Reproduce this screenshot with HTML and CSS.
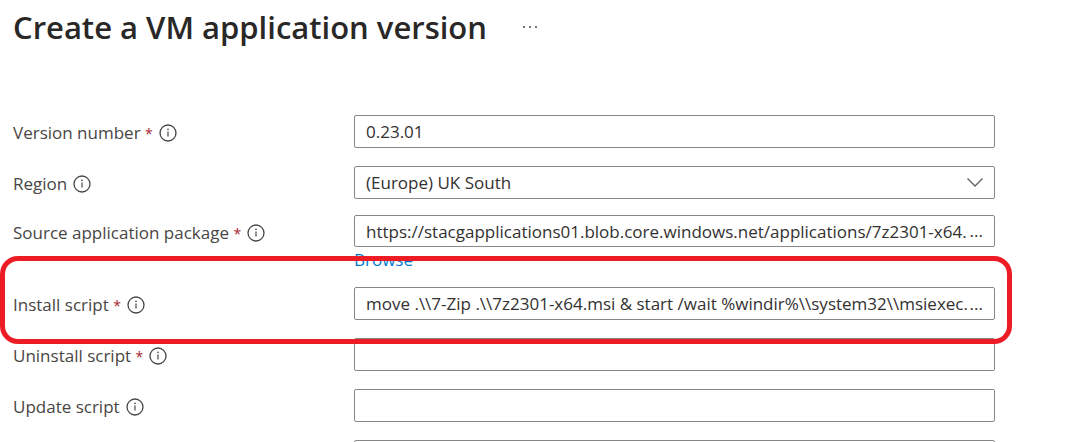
FILE: index.html
```html
<!DOCTYPE html>
<html lang="en">
<head>
<meta charset="utf-8">
<title>Create a VM application version</title>
<link rel="stylesheet" href="styles.css">
</head>
<body>
<svg class="defs" aria-hidden="true">
  <symbol id="info" viewBox="0 0 18 18">
    <circle cx="9" cy="9" r="8" fill="none" stroke="currentColor" stroke-width="1.3"/>
    <path d="M9 7.6V12.6" stroke="currentColor" stroke-width="1.2"/>
    <circle cx="9" cy="5.4" r="0.8" fill="currentColor"/>
  </symbol>
</svg>
<main class="page">
  <header class="header">
    <h1 class="title">Create a VM application version</h1>
    <button class="more" type="button" aria-label="More actions">
      <svg class="more-icon" viewBox="0 0 16 4" aria-hidden="true"><circle cx="2" cy="2" r="1"/><circle cx="8" cy="2" r="1"/><circle cx="14" cy="2" r="1"/></svg>
    </button>
  </header>
  <form class="form">
    <div class="row">
      <div class="caption"><label for="version">Version number <span class="required">*</span></label><button class="info" type="button" aria-label="About version number"><svg class="info-icon"><use href="#info"/></svg></button></div>
      <div class="field"><input class="input" id="version" type="text" value="0.23.01"></div>
    </div>
    <div class="row row-tight">
      <div class="caption"><label for="region">Region</label><button class="info" type="button" aria-label="About region"><svg class="info-icon"><use href="#info"/></svg></button></div>
      <div class="field">
        <select class="input" id="region"><option>(Europe) UK South</option></select>
        <svg class="chevron" viewBox="0 0 16 9" aria-hidden="true"><path d="M0.5 0.5L8 8L15.5 0.5"/></svg>
      </div>
    </div>
    <div class="row">
      <div class="caption"><label for="package">Source application package <span class="required">*</span></label><button class="info" type="button" aria-label="About source application package"><svg class="info-icon"><use href="#info"/></svg></button></div>
      <div class="stack">
        <div class="field field-short"><input class="input" id="package" type="text" value="https://stacgapplications01.blob.core.windows.net/applications/7z2301-x64."><span class="ellipsis">...</span></div>
        <a class="browse" href="#package">Browse</a>
      </div>
    </div>
    <div class="row row-marked">
      <div class="caption"><label for="install">Install script <span class="required">*</span></label><button class="info" type="button" aria-label="About install script"><svg class="info-icon"><use href="#info"/></svg></button></div>
      <div class="field"><input class="input" id="install" type="text" value="move .\\7-Zip .\\7z2301-x64.msi &amp; start /wait %windir%\\system32\\msiexec."><span class="ellipsis">...</span></div>
    </div>
    <div class="row">
      <div class="caption"><label for="uninstall">Uninstall script <span class="required">*</span></label><button class="info" type="button" aria-label="About uninstall script"><svg class="info-icon"><use href="#info"/></svg></button></div>
      <div class="field"><input class="input" id="uninstall" type="text"></div>
    </div>
    <div class="row">
      <div class="caption"><label for="update">Update script</label><button class="info" type="button" aria-label="About update script"><svg class="info-icon"><use href="#info"/></svg></button></div>
      <div class="field"><input class="input" id="update" type="text"></div>
    </div>
    <div class="row">
      <div class="caption"></div>
      <div class="field"><input class="input" type="text" aria-label="Additional setting"></div>
    </div>
  </form>
</main>
</body>
</html>
```

FILE: styles.css
```css
* {
  box-sizing: border-box;
}

html {
  overflow: hidden;
}

body {
  margin: 0;
  background: #fff;
  color: #323130;
  font-family: "Open Sans", "Noto Sans", sans-serif;
  font-size: 17px;
  line-height: 24px;
}

.defs {
  display: none;
}

.page {
  height: 100vh;
  overflow: hidden;
  padding: 6px 77px 0 13px;
}

.header {
  display: flex;
  align-items: center;
  gap: 35px;
  margin-bottom: 67px;
}

.title {
  margin: 0;
  color: #292827;
  font-size: 31px;
  font-weight: 600;
  line-height: 42px;
}

button {
  display: flex;
  padding: 0;
  border: 0;
  background: none;
  color: #484644;
}

.more-icon {
  width: 16px;
  height: 4px;
  fill: #484644;
}

.row {
  position: relative;
  display: grid;
  grid-template-columns: 341px 1fr;
  margin-bottom: 18px;
}

.row-tight {
  margin-bottom: 16px;
}

.caption {
  display: flex;
  align-items: center;
  gap: 6px;
  height: 36px;
  margin-bottom: -3px;
  color: #484644;
}

.required {
  color: #a4262c;
  font-size: 14px;
}

.info-icon {
  width: 18px;
  height: 18px;
}

.field {
  display: flex;
  align-items: center;
  height: 33px;
  padding: 0 11px;
  border: 1px solid #8a8886;
  border-radius: 2px;
}

.field-short {
  height: 32px;
}

.input {
  flex: 1;
  min-width: 0;
  height: 100%;
  padding: 0;
  border: 0;
  outline: 0;
  appearance: none;
  background: none;
  color: #323130;
  font: inherit;
}

.chevron {
  width: 16px;
  height: 9px;
  fill: none;
  stroke: #605e5c;
  stroke-width: 1.3;
}

.browse {
  display: block;
  padding-top: 4px;
  color: #0078d4;
  text-decoration: none;
  line-height: 18px;
}

.row-marked::after {
  content: "";
  position: absolute;
  z-index: 1;
  inset: -31px -17px -24px -13px;
  border: 5px solid #ed1c24;
  border-radius: 18px;
  pointer-events: none;
}
```
